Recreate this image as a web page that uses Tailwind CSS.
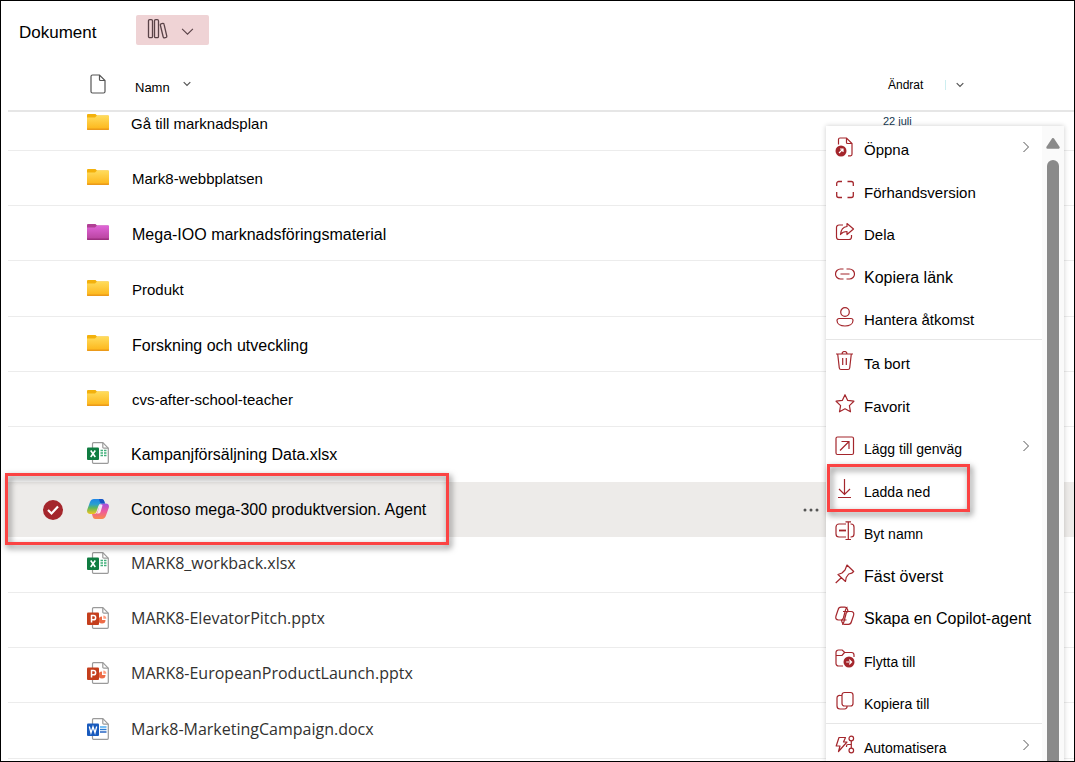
<!DOCTYPE html>
<html lang="sv">
<head>
<meta charset="utf-8">
<meta name="viewport" content="width=device-width, initial-scale=1">
<title>Dokument</title>
<script src="https://cdn.jsdelivr.net/npm/@tailwindcss/browser@4"></script>
</head>
<body class="bg-white font-['Liberation_Sans',Arial,sans-serif] text-black">

<svg class="absolute size-0" aria-hidden="true">
  <defs>
    <linearGradient id="gold" x1="0" y1="0" x2="0" y2="1"><stop offset="0" stop-color="#ffdc5c"/><stop offset="1" stop-color="#fdb71c"/></linearGradient>
    <linearGradient id="pink" x1="0" y1="0" x2="0" y2="1"><stop offset="0" stop-color="#e065d8"/><stop offset="1" stop-color="#b9449f"/></linearGradient>
    <linearGradient id="cpA" x1="0" y1="0" x2="0" y2="1"><stop offset="0" stop-color="#1d86e8"/><stop offset=".35" stop-color="#2a9fd0"/><stop offset=".6" stop-color="#62b85a"/><stop offset="1" stop-color="#f5c51c"/></linearGradient>
    <linearGradient id="cpB" x1="0" y1="0" x2="0" y2="1"><stop offset="0" stop-color="#a04fe0"/><stop offset=".5" stop-color="#ee5a9c"/><stop offset="1" stop-color="#f98a4a"/></linearGradient>
    <symbol id="folder" viewBox="0 0 22 16">
      <path d="M1 0h7.500l1.500 1.500H21a1 1 0 0 1 1 1v12.500a1 1 0 0 1-1 1H1a1 1 0 0 1-1-1V1a1 1 0 0 1 1-1z" fill="#f3b10c"/>
      <path d="M0 3.500h8L10 1.500H21a1 1 0 0 1 1 1V15H0z" fill="url(#gold)"/>
      <path d="M0 14.500h22V15a1 1 0 0 1-1 1H1a1 1 0 0 1-1-1z" fill="#eb9a1a"/>
    </symbol>
    <symbol id="folder-pink" viewBox="0 0 22 16">
      <path d="M1 0h7.500l1.500 1.500H21a1 1 0 0 1 1 1v12.500a1 1 0 0 1-1 1H1a1 1 0 0 1-1-1V1a1 1 0 0 1 1-1z" fill="#b03f94"/>
      <path d="M0 3.500h8L10 1.500H21a1 1 0 0 1 1 1V15H0z" fill="url(#pink)"/>
      <path d="M0 14.500h22V15a1 1 0 0 1-1 1H1a1 1 0 0 1-1-1z" fill="#9c2f80"/>
    </symbol>
    <symbol id="page" viewBox="0 0 22 22">
      <path d="M6.500.7h9.300l5.500 5.500v14.100a1 1 0 0 1-1 1H6.500a1 1 0 0 1-1-1V1.700a1 1 0 0 1 1-1z" fill="#fff" stroke="#9a9a9a" stroke-width="1.200"/>
      <path d="M15.800.7v4.500a1 1 0 0 0 1 1h4.500" fill="none" stroke="#9a9a9a" stroke-width="1.200"/>
    </symbol>
    <symbol id="xlsx" viewBox="0 0 22 22">
      <use href="#page"/>
      <path d="M13.500 8.500h2.500M17 8.500h2.500M13.500 11h2.500M17 11h2.500M13.500 13.500h2.500M17 13.500h2.500" stroke="#3fb079" stroke-width="1.400"/>
      <rect y="5.500" width="12" height="12.500" rx="1" fill="#107c41"/>
      <path d="M3.700 8.500l4.600 6.500M8.300 8.500L3.700 15" stroke="#fff" stroke-width="1.600"/>
    </symbol>
    <symbol id="pptx" viewBox="0 0 22 22">
      <use href="#page"/>
      <path d="M15 9.500v3.500h3.500a3.500 3.500 0 1 1-3.500-3.500z" fill="#ed6c47"/><path d="M16.300 8.500a3.200 3.200 0 0 1 3 3.200h-3z" fill="#ff9e80"/>
      <rect y="5.500" width="12" height="12.500" rx="1" fill="#c43e1c"/>
      <path d="M4.500 15.500v-7h2a2.100 2.100 0 0 1 0 4.300h-2" fill="none" stroke="#fff" stroke-width="1.500"/>
    </symbol>
    <symbol id="docx" viewBox="0 0 22 22">
      <use href="#page"/>
      <path d="M13 9h6.500" stroke="#41a5ee" stroke-width="1.400"/><path d="M13 11.500h6.500" stroke="#2b7cd3" stroke-width="1.400"/><path d="M13 14h6.500" stroke="#185abd" stroke-width="1.400"/>
      <rect y="5.500" width="12" height="12.500" rx="1" fill="#185abd"/>
      <path d="M2.300 8.500l1.700 6.300 2-6 2 6 1.700-6.300" fill="none" stroke="#fff" stroke-width="1.300"/>
    </symbol>
    <symbol id="chev" viewBox="0 0 12 12"><path d="M1 3.500l5 5 5-5" fill="none" stroke="currentColor"/></symbol>
    <symbol id="chev-s" viewBox="0 0 8 8"><path d="M.7 2.200L4 5.500l3.300-3.300" fill="none" stroke="currentColor" stroke-width="1.200"/></symbol>
    <symbol id="chev-r" viewBox="0 0 12 12"><path d="M3.500 1l5 5-5 5" fill="none" stroke="currentColor"/></symbol>
  </defs>
</svg>

<main class="relative h-screen overflow-hidden border border-black">
  <header class="flex items-center pt-[14px] pl-[18px]">
    <h1 class="w-[117px] pt-1.5 text-[17px] leading-6">Dokument</h1>
    <button type="button" aria-label="Byt bibliotek" class="flex h-[30px] w-[73px] items-center gap-[12px] rounded-[2px] bg-[#efd3d5] pb-[2px] pl-[11px] text-[#5a4348]">
      <svg class="h-5 w-[22px]" viewBox="0 0 22 20" fill="none" stroke="currentColor" stroke-width="1.300"><rect x="1.500" y=".7" width="4" height="18" rx="1.200"/><rect x="7.500" y=".7" width="4" height="18" rx="1.200"/><path d="M14 4.800l1.800-.4a1 1 0 0 1 1.200.8l2.800 12a1 1 0 0 1-.7 1.200l-1.700.4a1 1 0 0 1-1.200-.8L13.300 6a1 1 0 0 1 .7-1.200z"/></svg>
      <svg class="mt-1 size-[13px]"><use href="#chev"/></svg>
    </button>
  </header>

  <table class="ml-[7px] w-[calc(100%-7px)] table-fixed border-separate border-spacing-0 text-left">
    <colgroup><col class="w-[79px]"><col class="w-11"><col><col class="w-[36px]"><col class="w-[191px]"></colgroup>
    <thead>
      <tr class="h-[67px] *:border-b-2 *:border-[#e6e6e6] *:p-0 *:align-bottom *:font-normal">
        <th aria-label="Markerad"></th>
        <th><svg class="mb-4 ml-[2px] h-5 w-[18px]" viewBox="0 0 18 20" role="img" aria-label="Filtyp" fill="none" stroke="#555" stroke-width="1.200"><path d="M3.500 1h7l5.500 5.500v11a1.500 1.500 0 0 1-1.500 1.500h-11A1.500 1.500 0 0 1 2 17.500v-15A1.500 1.500 0 0 1 3.500 1zM10.500 1v4.500a1 1 0 0 0 1 1H16"/></svg></th>
        <th><button type="button" class="mb-[14px] ml-1 flex text-[13px] leading-4">Namn <svg class="ml-[13px] size-2 text-[#555]"><use href="#chev-s"/></svg></button></th>
        <th aria-label="Åtgärder"></th>
        <th><button type="button" class="mb-[17px] ml-[5px] flex items-center text-[12px] leading-4">Ändrat <span class="ml-[22px] h-2.5 w-px bg-[#cdeef0]"></span><svg class="ml-[10px] size-2 text-[#555]"><use href="#chev-s"/></svg></button></th>
      </tr>
    </thead>
    <tbody class="text-[15px] leading-6 [&_td]:border-b [&_td]:border-[#ececec] [&_td]:p-0 [&_td:nth-child(2)]:pb-[2px]">
      <tr class="h-[39px] *:align-top">
        <td></td><td><svg class="mt-[2px] h-4 w-[22px]"><use href="#folder"/></svg></td><td>Gå till marknadsplan</td><td></td>
        <td class="text-[11px] leading-[18px] text-[#14374f]">22 juli</td>
      </tr>
      <tr class="h-[55px]"><td></td><td><svg class="h-4 w-[22px]"><use href="#folder"/></svg></td><td class="pt-[2px]! pl-px!">Mark8-webbplatsen</td><td></td><td></td></tr>
      <tr class="h-[55px]"><td></td><td><svg class="h-4 w-[22px]"><use href="#folder-pink"/></svg></td><td class="pt-[3px]! pl-px! text-base">Mega-IOO marknadsföringsmaterial</td><td></td><td></td></tr>
      <tr class="h-[56px]"><td></td><td><svg class="h-4 w-[22px]"><use href="#folder"/></svg></td><td class="pt-[2px]! pl-px!">Produkt</td><td></td><td></td></tr>
      <tr class="h-[55px]"><td></td><td><svg class="h-4 w-[22px]"><use href="#folder"/></svg></td><td class="pt-[3px]! pl-px! text-base">Forskning och utveckling</td><td></td><td></td></tr>
      <tr class="h-[55px]"><td></td><td><svg class="h-4 w-[22px]"><use href="#folder"/></svg></td><td class="pt-[2px]! pl-px!">cvs-after-school-teacher</td><td></td><td></td></tr>
      <tr class="h-[55px] *:border-b-0!"><td></td><td class="pb-[4px]!"><svg class="size-[22px]"><use href="#xlsx"/></svg></td><td class="pt-px! text-base">Kampanjförsäljning Data.xlsx</td><td></td><td></td></tr>
      <tr class="h-[55px] *:border-b-0! *:bg-[#edebe9]">
        <td class="relative">
          <label class="ml-[35px] flex size-5 items-center justify-center rounded-full bg-[#a4262c]"><input type="checkbox" checked class="peer absolute size-5 appearance-none" aria-label="Markera Contoso mega-300 produktversion. Agent"><svg class="hidden size-3 peer-checked:block" viewBox="0 0 12 12" fill="none" stroke="#fff" stroke-width="2.200"><path d="M1 6l3.500 3.500L11 2.500"/></svg></label>
          <div class="pointer-events-none absolute -top-[9px] -left-[3px] z-10 h-[72px] w-[444px] border-3 border-[#fb4343] drop-shadow-[2px_3px_3px_rgba(0,0,0,0.55)]"></div>
        </td>
        <td><svg class="h-5 w-[22px]" viewBox="0 0 22 20"><path d="M7 0h7.500c1.800 0 2.400 1 3 3l.4 1.500h-3c-2 0-3 1-3.700 3L9.500 12.500C8.700 14.700 7.700 15 6 15H3.200C.5 15-.5 13 .3 10.500L3 3C3.800 1 5 0 7 0z" fill="url(#cpA)"/><path d="M15.500 4.500h3.300c2.700 0 3.700 2 2.900 4.500L19 16.500c-.8 2.300-2 3.500-4 3.500H8.500c-1.800 0-2.400-1-3-3L5 15h2c2 0 3-.8 3.700-3l1.800-5C13.300 5 14 4.500 15.500 4.500z" fill="url(#cpB)"/><path d="M12.700 5.500h1.800c1.300 0 1 1 .7 2l-1.500 5c-.5 1.500-1 2-2.500 2H9.500c1-.4 1.200-1.500 1.500-2.500z" fill="#fff" fill-opacity=".85"/><path d="M12 0h2.500c1.800 0 2.400 1 3 3l.5 1.500h-3.500C13 4.500 12.500 2 12 0z" fill="#1a52c4"/></svg></td>
        <td class="text-base">Contoso mega-300 produktversion. Agent</td>
        <td><button type="button" aria-label="Fler åtgärder" class="-ml-[46px] flex h-6 w-5 items-center justify-center text-[#555]"><svg class="h-1 w-4" viewBox="0 0 16 4" fill="currentColor"><circle cx="2" cy="2" r="1.500"/><circle cx="8" cy="2" r="1.500"/><circle cx="14" cy="2" r="1.500"/></svg></button></td><td></td>
      </tr>
      <tr class="h-[56px] font-['Open_Sans','Noto_Sans',sans-serif] text-base text-[#323130]"><td></td><td class="pb-[4px]!"><svg class="size-[22px]"><use href="#xlsx"/></svg></td><td class="pb-[4px]!">MARK8_workback.xlsx</td><td></td><td></td></tr>
      <tr class="h-[55px] font-['Open_Sans','Noto_Sans',sans-serif] text-base text-[#323130]"><td></td><td class="pb-[4px]!"><svg class="size-[22px]"><use href="#pptx"/></svg></td><td class="pb-[4px]!">MARK8-ElevatorPitch.pptx</td><td></td><td></td></tr>
      <tr class="h-[55px] font-['Open_Sans','Noto_Sans',sans-serif] text-base text-[#323130]"><td></td><td class="pb-[4px]!"><svg class="size-[22px]"><use href="#pptx"/></svg></td><td class="pb-[4px]!">MARK8-EuropeanProductLaunch.pptx</td><td></td><td></td></tr>
      <tr class="h-[56px] font-['Open_Sans','Noto_Sans',sans-serif] text-base text-[#323130]"><td></td><td class="pb-[4px]!"><svg class="size-[22px]"><use href="#docx"/></svg></td><td class="pb-[4px]!">Mark8-MarketingCampaign.docx</td><td></td><td></td></tr>
    </tbody>
  </table>

  <!-- Context menu -->
  <div class="absolute top-[125px] right-[10px] bottom-0 flex w-[238px] bg-white shadow-[0_0_5px_rgba(0,0,0,0.2)]">
    <div role="menu" class="min-w-0 flex-1 text-[15px] leading-5 [&_button]:flex [&_button]:h-[42px] [&_button]:w-full [&_button]:items-center [&_button]:gap-[9px] [&_button]:pr-[10px] [&_button]:pl-[9px] [&_button]:text-left [&_button:nth-child(even)]:h-[43px] [&_span]:flex-1 [&_span]:pt-[6px] [&_span]:whitespace-nowrap">
      <div class="border-b border-[#e6e6e6] pb-px">
        <button type="button" role="menuitem"><svg class="size-5 text-[#a4262c]" viewBox="0 0 20 20" fill="none" stroke="currentColor" stroke-width="1.200"><path d="M3.500 7.500v-5A1.500 1.500 0 0 1 5 1h6.500L17 6.500v10.800a1.500 1.500 0 0 1-1.500 1.500H13M11.500 1v4.500a1 1 0 0 0 1 1H17"/><circle cx="6" cy="14" r="5.500" fill="currentColor" stroke="none"/><path d="M4 16l4-4M5 12h3v3" stroke="#fff"/></svg><span>Öppna</span><svg class="size-3 text-[#555]"><use href="#chev-r"/></svg></button>
        <button type="button" role="menuitem"><svg class="size-5 text-[#a4262c]" viewBox="0 0 20 20" fill="none" stroke="currentColor" stroke-width="1.300"><path d="M1.700 6V3.500a2 2 0 0 1 2-2H7M12.500 1.500h3.800a2 2 0 0 1 2 2V6M18.300 12v3.500a2 2 0 0 1-2 2h-3.800M7 17.500H3.700a2 2 0 0 1-2-2V12"/></svg><span>Förhandsversion</span></button>
        <button type="button" role="menuitem"><svg class="size-5 text-[#a4262c]" viewBox="0 0 20 20" fill="none" stroke="currentColor" stroke-width="1.200" stroke-linejoin="round"><path d="M8 3H4a2.500 2.500 0 0 0-2.500 2.500v9.500A2.500 2.500 0 0 0 4 17.500h10a2.500 2.500 0 0 0 2.500-2.500v-2M12 1.500l6.500 5.500-6.500 5.500V9.500c-3 0-5 1-6.500 3 .3-4 2.500-7.500 6.500-8z"/></svg><span>Dela</span></button>
        <button type="button" role="menuitem"><svg class="size-5 text-[#a4262c]" viewBox="0 0 20 20" fill="none" stroke="currentColor" stroke-width="1.200"><path d="M8.500 4H5.500a5 5 0 0 0 0 10h3M11.500 4h3a5 5 0 0 1 0 10h-3M5.500 9h9"/></svg><span class="text-base">Kopiera länk</span></button>
        <button type="button" role="menuitem"><svg class="size-5 text-[#a4262c]" viewBox="0 0 20 20" fill="none" stroke="currentColor" stroke-width="1.200"><circle cx="10" cy="5" r="4.300"/><path d="M4 11.500h12a2 2 0 0 1 2 2c0 3.500-3.500 5.500-8 5.500s-8-2-8-5.500a2 2 0 0 1 2-2z"/></svg><span>Hantera åtkomst</span></button>
      </div>
      <div class="border-b border-[#e6e6e6] pb-px">
        <button type="button" role="menuitem"><svg class="size-5 text-[#a4262c]" viewBox="0 0 20 20" fill="none" stroke="currentColor" stroke-width="1.200"><path d="M1 3h17M7 3a2.500 2.500 0 0 1 5 0M2.700 3l1.600 14a1.700 1.700 0 0 0 1.700 1.500h7a1.700 1.700 0 0 0 1.700-1.500l1.600-14M7.700 7v7M11.300 7v7"/></svg><span>Ta bort</span></button>
        <button type="button" role="menuitem"><svg class="size-5 text-[#a4262c]" viewBox="0 0 20 20" fill="none" stroke="currentColor" stroke-width="1.200" stroke-linejoin="round"><path d="M10 .7l2.700 5.700 6.200.8-4.500 4.400 1.100 6.200-5.500-3-5.500 3 1.100-6.200L1.100 7.200l6.200-.8z"/></svg><span>Favorit</span></button>
        <button type="button" role="menuitem"><svg class="size-5 text-[#a4262c]" viewBox="0 0 20 20" fill="none" stroke="currentColor" stroke-width="1.200"><rect x="1" y="1" width="17.500" height="17.500" rx="1.500"/><path d="M5 14.500l9-9M6.500 5.500H14V13"/></svg><span class="text-sm">Lägg till genväg</span><svg class="size-3 text-[#555]"><use href="#chev-r"/></svg></button>
        <button type="button" role="menuitem" class="relative"><svg class="size-5 text-[#a4262c]" viewBox="0 0 20 20" fill="none" stroke="currentColor" stroke-width="1.200"><path d="M9.500 0v15M4 10l5.500 5.500L15 10M3 18.500h13"/></svg><span class="text-sm">Ladda ned</span>
          <i class="pointer-events-none absolute -top-[3px] left-px h-[48px] w-[143px] border-3 border-[#fb4343] drop-shadow-[2px_3px_3px_rgba(0,0,0,0.55)]"></i></button>
        <button type="button" role="menuitem"><svg class="size-5 text-[#a4262c]" viewBox="0 0 20 20" fill="none" stroke="currentColor" stroke-width="1.200"><path d="M11 3H4a3 3 0 0 0-3 3v7a3 3 0 0 0 3 3h7M15.500 3H16a3 3 0 0 1 3 3v7a3 3 0 0 1-3 3h-.5M13.300 1v17.500M10.500.8h5.500M10.500 18.500h5.500"/><path d="M4 9.500h7" stroke-width="1.800"/></svg><span class="text-sm">Byt namn</span></button>
        <button type="button" role="menuitem"><svg class="size-5 text-[#a4262c]" viewBox="0 0 20 20" fill="none" stroke="currentColor" stroke-width="1.200" stroke-linejoin="round"><path d="M12 1l6.700 6.500-2 1.700-3 .8-2.500 3.500-.7 4L3 10.500 7 9l3-3zM6.500 13.500L.7 19"/></svg><span class="text-base">Fäst överst</span></button>
        <button type="button" role="menuitem"><svg class="size-5 text-[#a4262c]" viewBox="0 0 20 20" fill="none" stroke="currentColor" stroke-width="1.200"><path d="M13 5.500l-.5-2C12 1.800 11.500 1.200 10 1.200H6C4.200 1.200 3.500 2 3 4L1 10c-.7 2.500.2 4 2.500 4H6c1.500 0 2-.8 2.400-2L10.500 4c.5-1.800.7-2.800 2-2.800M6.500 14l.5 2c.5 1.700 1 2.300 2.500 2.300h4c1.800 0 2.500-.8 3-2.800l2-6c.7-2.500-.2-4-2.500-4h-2.500c-1.500 0-2 .8-2.400 2L9 15.500c-.5 1.800-.7 2.800-2 2.800M8 5.500h5M6.500 14h5"/></svg><span class="text-base">Skapa en Copilot-agent</span></button>
        <button type="button" role="menuitem"><svg class="size-5 text-[#a4262c]" viewBox="0 0 20 20" fill="none" stroke="currentColor" stroke-width="1.200"><path d="M8 17H3.500A2.500 2.500 0 0 1 1 14.500v-11A2.500 2.500 0 0 1 3.500 1h3.700l2.500 2.500h6.800A2.500 2.500 0 0 1 19 6v2M1 6.500h6l2.500-3"/><circle cx="14" cy="13" r="5.500" fill="currentColor" stroke="none"/><path d="M11.200 13h5.300M14.300 10.700l2.300 2.300-2.300 2.300" stroke="#fff"/></svg><span class="text-sm">Flytta till</span></button>
        <button type="button" role="menuitem"><svg class="size-5 text-[#a4262c]" viewBox="0 0 20 20" fill="none" stroke="currentColor" stroke-width="1.200"><rect x="7" y="1.500" width="11" height="13.500" rx="2.500"/><path d="M7 4.500H5A2.500 2.500 0 0 0 2 7v8a3 3 0 0 0 3 3h4.500a2.500 2.500 0 0 0 2.500-3"/></svg><span class="text-sm">Kopiera till</span></button>
      </div>
      <div>
        <button type="button" role="menuitem"><svg class="size-5 text-[#a4262c]" viewBox="0 0 20 20" fill="none" stroke="currentColor" stroke-width="1.200" stroke-linejoin="round"><path d="M4 2.500h6.500L8.500 7H12L3.500 16.500 5 11H1.200z"/><circle cx="16.300" cy="3.500" r="2.300"/><circle cx="16.300" cy="15.500" r="2.300"/><path d="M16.300 5.800v7.400M16.300 9.500h-3.300a1.500 1.500 0 0 0-1.500 1.500v1"/></svg><span class="text-sm">Automatisera</span><svg class="size-3 text-[#555]"><use href="#chev-r"/></svg></button>
      </div>
    </div>
    <div class="flex w-[22px] flex-col items-center bg-[#fafafa] pt-3" aria-hidden="true">
      <svg class="h-[11px] w-[14px]" viewBox="0 0 14 11"><path d="M7 1.200L12.500 9.500h-11z" fill="#8a8a8a" stroke="#8a8a8a" stroke-width="2.400" stroke-linejoin="round"/></svg>
      <div class="mt-[11px] w-3 flex-1 rounded-t-full bg-[#8a8a8a]"></div>
    </div>
  </div>
</main>
</body>
</html>
